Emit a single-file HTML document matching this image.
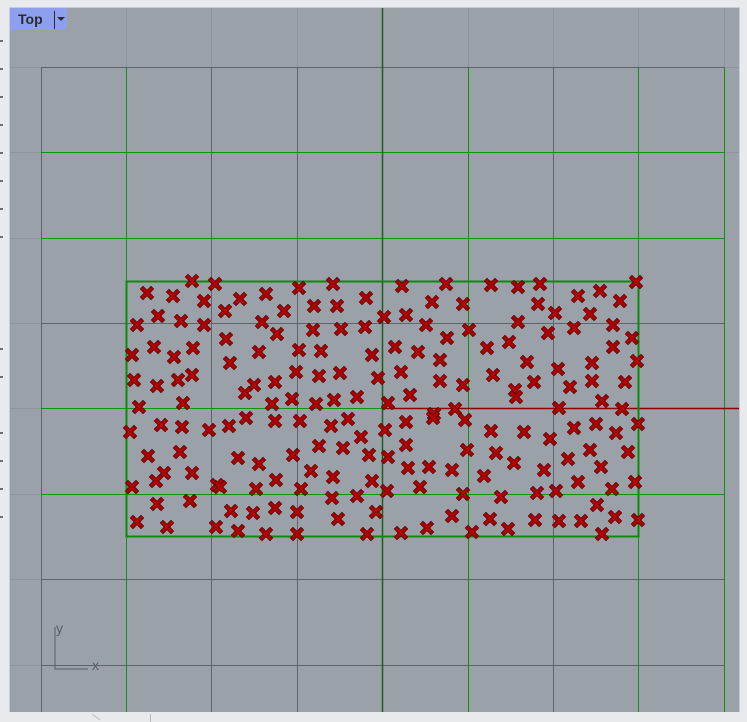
<!DOCTYPE html>
<html><head><meta charset="utf-8"><style>
html,body{margin:0;padding:0;background:#e9eaee;width:747px;height:722px;overflow:hidden;font-family:"Liberation Sans",sans-serif}
</style></head><body>
<svg width="747" height="722" viewBox="0 0 747 722" xmlns="http://www.w3.org/2000/svg" style="position:absolute;left:0;top:0">
<defs>
<g id="m"><path d="M-4,-4L4,4M4,-4L-4,4" stroke="#5a0000" stroke-width="4.6" stroke-linecap="square"/><path d="M-4,-4L4,4M4,-4L-4,4" stroke="#b00000" stroke-width="3" stroke-linecap="square"/></g>
</defs>
<rect x="0" y="0" width="747" height="722" fill="#e9eaee"/>
<rect x="9" y="7" width="731" height="706" fill="#c9ccd2"/>
<rect x="10" y="8" width="729" height="704" fill="#9aa1a9"/>
<g stroke="#8e959d" stroke-width="1">
<path d="M126.5,8V67M211.5,8V67M297.5,8V67M468.5,8V67M553.5,8V67M638.5,8V67M724.5,8V67"/>
<path d="M10,152.5H41M10,238.5H41M10,323.5H41M10,408.5H41M10,494.5H41M10,579.5H41M10,665.5H41M10,67.5H41"/>
<path d="M724,67.5H739M724,152.5H739"/>
</g>
<g stroke="#5d646b" stroke-width="1">
<path d="M41.5,67V712M211.5,67V712M297.5,67V712M553.5,67V712"/>
<path d="M41,67.5H724M41,323.5H724M41,579.5H724M41,665.5H724"/>
</g>
<g stroke="#129112" stroke-width="1">
<path d="M126.5,67V712M468.5,67V712M638.5,67V712M724.5,67V712"/>
<path d="M41,152.5H724M41,238.5H724M41,408.5H382M41,494.5H724"/>
</g>
<path d="M382.5,8V712" stroke="#1d5f1d" stroke-width="1.5"/>
<path d="M382,408.5H739" stroke="#8c0000" stroke-width="1.5"/>
<rect x="126.5" y="281.5" width="512" height="255" fill="none" stroke="#0c8a0c" stroke-width="2"/>
<g fill="#e9eaee"><rect x="0" y="712" width="747" height="10"/></g>
<path d="M55,627V669H88" fill="none" stroke="#5a5f65" stroke-width="1"/>
<text x="56" y="633" font-size="14" fill="#5a5f65">y</text>
<text x="92" y="670" font-size="14" fill="#5a5f65">x</text>
<path d="M92,714L100,720M150.5,714V722" stroke="#b8bbc2"/>
<g fill="#6a6e75"><rect x="0" y="40" width="3" height="2"/><rect x="0" y="68" width="3" height="2"/><rect x="0" y="96" width="3" height="2"/><rect x="0" y="124" width="3" height="2"/><rect x="0" y="152" width="3" height="2"/><rect x="0" y="180" width="3" height="2"/><rect x="0" y="208" width="3" height="2"/><rect x="0" y="236" width="3" height="2"/><rect x="0" y="348" width="3" height="2"/><rect x="0" y="376" width="3" height="2"/><rect x="0" y="432" width="3" height="2"/><rect x="0" y="460" width="3" height="2"/><rect x="0" y="488" width="3" height="2"/><rect x="0" y="516" width="3" height="2"/></g>
<path d="M10,8H67V25Q67,30 62,30H10Z" fill="#8e9ff0"/>
<text x="18" y="24" font-size="14" font-weight="bold" fill="#2b2b2b">Top</text>
<path d="M54.5,11V29" stroke="#2b2b2b"/>
<path d="M57,17H65L61,21Z" fill="#2b2b2b"/>
<g>
<use href="#m" x="192" y="281"/><use href="#m" x="215" y="284"/><use href="#m" x="147" y="293"/><use href="#m" x="173" y="296"/><use href="#m" x="204" y="301"/><use href="#m" x="240" y="299"/><use href="#m" x="266" y="294"/><use href="#m" x="299" y="288"/><use href="#m" x="333" y="284"/><use href="#m" x="314" y="306"/><use href="#m" x="337" y="306"/><use href="#m" x="366" y="298"/><use href="#m" x="402" y="286"/><use href="#m" x="446" y="284"/><use href="#m" x="432" y="302"/><use href="#m" x="463" y="304"/><use href="#m" x="491" y="285"/><use href="#m" x="518" y="287"/><use href="#m" x="540" y="284"/><use href="#m" x="538" y="304"/><use href="#m" x="578" y="296"/><use href="#m" x="600" y="291"/><use href="#m" x="620" y="301"/><use href="#m" x="636" y="282"/>
<use href="#m" x="137" y="325"/><use href="#m" x="158" y="316"/><use href="#m" x="181" y="321"/><use href="#m" x="204" y="325"/><use href="#m" x="225" y="311"/><use href="#m" x="262" y="322"/><use href="#m" x="284" y="311"/><use href="#m" x="313" y="330"/><use href="#m" x="341" y="329"/><use href="#m" x="365" y="327"/><use href="#m" x="384" y="317"/><use href="#m" x="406" y="315"/><use href="#m" x="426" y="325"/><use href="#m" x="447" y="338"/><use href="#m" x="469" y="330"/><use href="#m" x="518" y="322"/><use href="#m" x="555" y="313"/><use href="#m" x="590" y="314"/><use href="#m" x="574" y="328"/><use href="#m" x="613" y="325"/><use href="#m" x="632" y="338"/>
<use href="#m" x="132" y="355"/><use href="#m" x="154" y="347"/><use href="#m" x="174" y="357"/><use href="#m" x="193" y="348"/><use href="#m" x="226" y="339"/><use href="#m" x="259" y="352"/><use href="#m" x="277" y="334"/><use href="#m" x="299" y="350"/><use href="#m" x="321" y="351"/><use href="#m" x="372" y="355"/><use href="#m" x="395" y="347"/><use href="#m" x="418" y="352"/><use href="#m" x="440" y="360"/><use href="#m" x="487" y="348"/><use href="#m" x="509" y="342"/><use href="#m" x="548" y="333"/><use href="#m" x="613" y="347"/><use href="#m" x="637" y="361"/><use href="#m" x="527" y="362"/>
<use href="#m" x="134" y="380"/><use href="#m" x="157" y="386"/><use href="#m" x="178" y="380"/><use href="#m" x="192" y="375"/><use href="#m" x="230" y="363"/><use href="#m" x="254" y="385"/><use href="#m" x="275" y="382"/><use href="#m" x="296" y="372"/><use href="#m" x="319" y="376"/><use href="#m" x="340" y="373"/><use href="#m" x="378" y="378"/><use href="#m" x="401" y="372"/><use href="#m" x="410" y="395"/><use href="#m" x="440" y="381"/><use href="#m" x="463" y="385"/><use href="#m" x="493" y="375"/><use href="#m" x="515" y="390"/><use href="#m" x="534" y="382"/><use href="#m" x="558" y="369"/><use href="#m" x="592" y="363"/><use href="#m" x="570" y="387"/><use href="#m" x="592" y="381"/><use href="#m" x="625" y="382"/>
<use href="#m" x="139" y="407"/><use href="#m" x="183" y="403"/><use href="#m" x="245" y="393"/><use href="#m" x="272" y="404"/><use href="#m" x="292" y="399"/><use href="#m" x="316" y="404"/><use href="#m" x="334" y="400"/><use href="#m" x="357" y="397"/><use href="#m" x="388" y="403"/><use href="#m" x="434" y="414"/><use href="#m" x="455" y="409"/><use href="#m" x="516" y="397"/><use href="#m" x="559" y="408"/><use href="#m" x="602" y="401"/><use href="#m" x="622" y="409"/>
<use href="#m" x="130" y="432"/><use href="#m" x="161" y="425"/><use href="#m" x="182" y="427"/><use href="#m" x="209" y="430"/><use href="#m" x="229" y="426"/><use href="#m" x="246" y="418"/><use href="#m" x="275" y="421"/><use href="#m" x="300" y="421"/><use href="#m" x="331" y="426"/><use href="#m" x="348" y="419"/><use href="#m" x="361" y="437"/><use href="#m" x="385" y="430"/><use href="#m" x="406" y="422"/><use href="#m" x="433" y="418"/><use href="#m" x="465" y="420"/><use href="#m" x="491" y="431"/><use href="#m" x="524" y="432"/><use href="#m" x="550" y="439"/><use href="#m" x="574" y="428"/><use href="#m" x="596" y="424"/><use href="#m" x="616" y="433"/><use href="#m" x="638" y="424"/>
<use href="#m" x="148" y="456"/><use href="#m" x="164" y="473"/><use href="#m" x="180" y="452"/><use href="#m" x="192" y="473"/><use href="#m" x="217" y="485"/><use href="#m" x="238" y="458"/><use href="#m" x="259" y="464"/><use href="#m" x="293" y="455"/><use href="#m" x="319" y="446"/><use href="#m" x="343" y="448"/><use href="#m" x="369" y="455"/><use href="#m" x="388" y="457"/><use href="#m" x="406" y="445"/><use href="#m" x="408" y="468"/><use href="#m" x="429" y="467"/><use href="#m" x="452" y="470"/><use href="#m" x="467" y="450"/><use href="#m" x="496" y="453"/><use href="#m" x="514" y="463"/><use href="#m" x="544" y="470"/><use href="#m" x="568" y="459"/><use href="#m" x="590" y="450"/><use href="#m" x="601" y="467"/><use href="#m" x="628" y="452"/><use href="#m" x="635" y="482"/>
<use href="#m" x="132" y="487"/><use href="#m" x="156" y="481"/><use href="#m" x="220" y="487"/><use href="#m" x="256" y="489"/><use href="#m" x="276" y="480"/><use href="#m" x="301" y="489"/><use href="#m" x="311" y="471"/><use href="#m" x="333" y="477"/><use href="#m" x="332" y="498"/><use href="#m" x="357" y="496"/><use href="#m" x="372" y="481"/><use href="#m" x="387" y="491"/><use href="#m" x="420" y="487"/><use href="#m" x="463" y="494"/><use href="#m" x="484" y="476"/><use href="#m" x="501" y="497"/><use href="#m" x="537" y="493"/><use href="#m" x="556" y="491"/><use href="#m" x="578" y="482"/><use href="#m" x="612" y="489"/>
<use href="#m" x="137" y="522"/><use href="#m" x="157" y="504"/><use href="#m" x="167" y="527"/><use href="#m" x="190" y="501"/><use href="#m" x="216" y="527"/><use href="#m" x="238" y="531"/><use href="#m" x="253" y="513"/><use href="#m" x="231" y="511"/><use href="#m" x="266" y="534"/><use href="#m" x="275" y="508"/><use href="#m" x="297" y="512"/><use href="#m" x="297" y="534"/><use href="#m" x="338" y="519"/><use href="#m" x="367" y="534"/><use href="#m" x="376" y="512"/><use href="#m" x="401" y="533"/><use href="#m" x="427" y="528"/><use href="#m" x="452" y="516"/><use href="#m" x="472" y="532"/><use href="#m" x="490" y="519"/><use href="#m" x="508" y="529"/><use href="#m" x="535" y="520"/><use href="#m" x="559" y="521"/><use href="#m" x="581" y="521"/><use href="#m" x="597" y="505"/><use href="#m" x="602" y="534"/><use href="#m" x="615" y="517"/><use href="#m" x="638" y="520"/>
</g>
</svg>
</body></html>
